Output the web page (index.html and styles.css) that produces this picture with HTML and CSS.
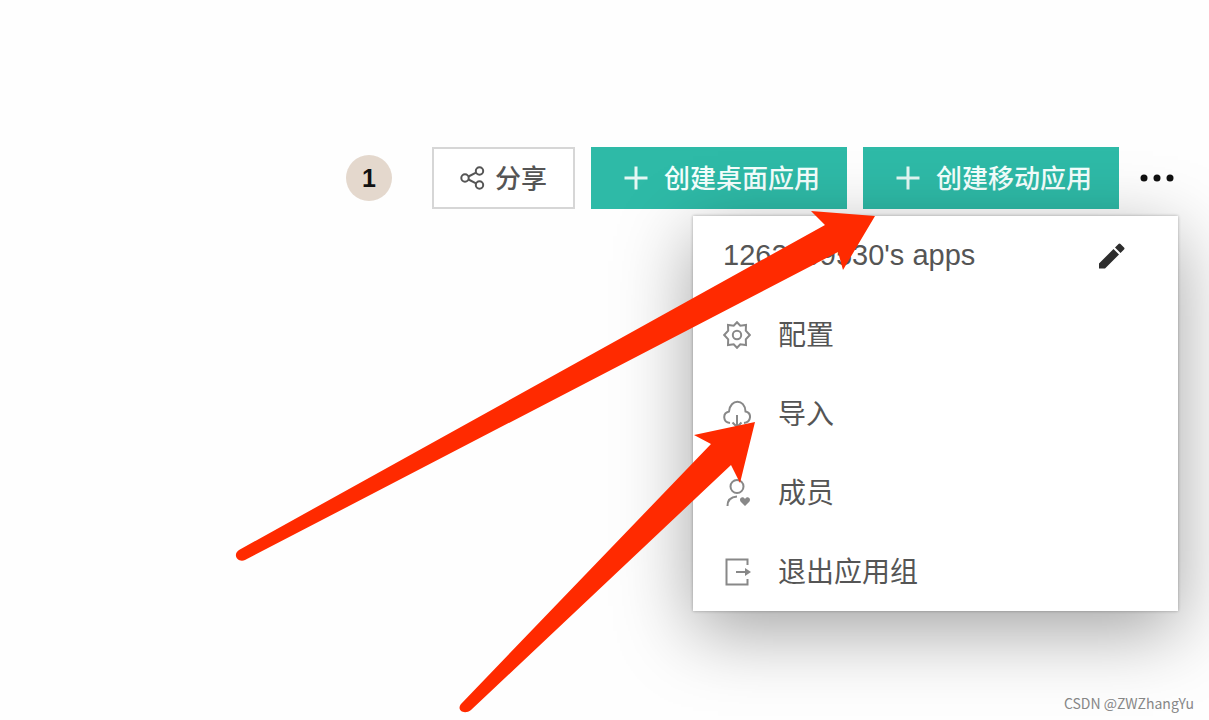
FILE: index.html
```html
<!DOCTYPE html>
<html lang="zh-CN">
<head>
    <meta charset="UTF-8">
    <meta name="viewport" content="width=device-width, initial-scale=1.0">
    <title>应用组</title>
    <link rel="stylesheet" href="styles.css">
</head>
<body>
    <header class="toolbar">
        <span class="member-count">1</span>
        <button type="button" class="btn btn-share">
            <svg class="share-icon" viewBox="0 0 26 26">
                <circle cx="5" cy="13" r="3.7"/>
                <circle cx="19.500" cy="6" r="3.700"/>
                <circle cx="19.500" cy="20" r="3.700"/>
                <path d="M8.500 11.500l7.500-3.800M8.500 14.500l7.500 3.800"/>
            </svg>
            <span class="label">分享</span>
        </button>
        <button type="button" class="btn btn-create">
            <svg class="plus-icon" viewBox="0 0 24 24"><path d="M12 0.500v23M0.500 12h23"/></svg>
            <span class="label">创建桌面应用</span>
        </button>
        <button type="button" class="btn btn-create">
            <svg class="plus-icon" viewBox="0 0 24 24"><path d="M12 0.500v23M0.500 12h23"/></svg>
            <span class="label">创建移动应用</span>
        </button>
        <button type="button" class="btn-more" aria-label="更多">
            <svg class="more-icon" viewBox="0 0 34 8">
                <circle cx="4" cy="4" r="3.500"/>
                <circle cx="17" cy="4" r="3.500"/>
                <circle cx="30" cy="4" r="3.500"/>
            </svg>
        </button>

        <div class="menu">
            <div class="menu-title">
                <span>1262009530's apps</span>
                <button type="button" class="btn-edit" aria-label="编辑">
                    <svg class="edit-icon" viewBox="0 0 26 26">
                        <path d="M0 20.500L14.500 6l5.500 5.500L6 25.500H0zM16 4.500L19.500 1q1-1 2 0l3.500 3.500q1 1 0 2L21.500 10z"/>
                    </svg>
                </button>
            </div>
            <button type="button" class="menu-item">
                <svg class="menu-icon" viewBox="0 0 28 28">
                    <path d="M14 1.200l3.300 3.600 5.700-.8-.2 5.600 4 4.400-4 4.400.2 5.600-5.700-.8L14 26.800l-3.300-3.600-5.700.8.2-5.600-4-4.400 4-4.400L5 4l5.700.8z"/>
                    <circle cx="14" cy="14" r="4.200"/>
                </svg>
                <span class="label">配置</span>
            </button>
            <button type="button" class="menu-item">
                <svg class="menu-icon" viewBox="0 0 28 28">
                    <path d="M7 23C-.5 22-.5 13 6 11.500 7-1.500 22-1.500 22.500 11.500 29 13 28.500 22 21 23M14 15v12M9.500 22.500L14 27l4.500-4.500"/>
                </svg>
                <span class="label">导入</span>
            </button>
            <button type="button" class="menu-item">
                <svg class="menu-icon" viewBox="0 0 28 28">
                    <circle cx="14" cy="7.500" r="6.500"/>
                    <path d="M4.500 27c0-5 3-9 9.500-9.500"/>
                    <path class="solid" d="M22 27l-4.500-4.500c-2-3.500 2.500-6 4.500-2.500 2-3.500 6.500-1 4.500 2.500z"/>
                </svg>
                <span class="label">成员</span>
            </button>
            <button type="button" class="menu-item">
                <svg class="menu-icon" viewBox="0 0 28 28">
                    <path d="M24.500 7V1.500h-21v25h21V21M13 14h13"/>
                    <path class="solid" d="M22 10l6 4-6 4z"/>
                </svg>
                <span class="label">退出应用组</span>
            </button>
        </div>
    </header>

    <svg class="arrows" viewBox="0 0 1209 720" aria-hidden="true">
        <path d="M239 550L825 225 811 211 875 216 843 270 838 252 245 560C238 563 232 555 239 550z"/>
        <path d="M461 704L711 444 694 435 755 422 740 483 731 465 471 710C465 715 456 711 461 704z"/>
    </svg>

    <footer class="watermark">CSDN @ZWZhangYu</footer>
</body>
</html>
```

FILE: styles.css
```css
* {
    box-sizing: border-box;
}

body {
    margin: 0;
    min-height: 100vh;
    display: flex;
    flex-direction: column;
    justify-content: space-between;
    position: relative;
    overflow-x: hidden;
    background-color: #fefefe;
    font-family: "Liberation Sans", "Noto Sans CJK SC", sans-serif;
}

button {
    padding: 0;
    border: none;
    background: none;
    font-family: inherit;
    cursor: pointer;
}

svg {
    fill: none;
    flex-shrink: 0;
}

.label {
    padding-bottom: 4px;
}

.toolbar {
    display: flex;
    justify-content: flex-end;
    align-items: center;
    gap: 16px;
    margin-top: 147px;
    padding-right: 35px;
    position: relative;
}

.member-count {
    width: 46px;
    height: 46px;
    margin-right: 24px;
    border-radius: 50%;
    background-color: #e4d8cd;
    color: #111;
    font-size: 25px;
    font-weight: bold;
    line-height: 46px;
    text-align: center;
}

.btn {
    display: flex;
    justify-content: center;
    align-items: center;
    height: 62px;
    font-size: 26px;
    font-weight: 500;
    white-space: nowrap;
}

.btn-share {
    gap: 9px;
    padding: 0 26px;
    border: 2px solid #d6d6d6;
    background-color: #fff;
    color: #555;
}

.share-icon {
    width: 26px;
    height: 26px;
    stroke: #555;
    stroke-width: 2;
}

.btn-create {
    gap: 16px;
    padding: 0 27px 0 33px;
    background-color: #2ebaa7;
    color: #f4fffd;
}

.plus-icon {
    width: 24px;
    height: 24px;
    stroke: #e4f7f4;
    stroke-width: 3;
}

.btn-more {
    display: flex;
    margin-left: 5px;
}

.more-icon {
    width: 34px;
    height: 8px;
    fill: #111;
}

.menu {
    position: absolute;
    top: 100%;
    right: 31px;
    width: 485px;
    margin-top: 7px;
    background-color: #fff;
    box-shadow: 0 0 3px rgba(0, 0, 0, 0.3), 0 20px 70px rgba(0, 0, 0, 0.36);
}

.menu-title,
.menu-item {
    display: flex;
    align-items: center;
    width: 100%;
    height: 79px;
    padding: 0 30px;
    color: #555;
}

.menu-title {
    justify-content: space-between;
    padding-right: 53px;
    font-size: 29px;
}

.btn-edit {
    display: flex;
}

.edit-icon {
    width: 26px;
    height: 26px;
    fill: #2d2d2d;
}

.menu-item {
    gap: 27px;
    font-size: 28px;
    text-align: left;
}

.menu-icon {
    width: 28px;
    height: 28px;
    stroke: #888;
    stroke-width: 2;
}

.menu-icon .solid {
    fill: #888;
    stroke: none;
}

.arrows {
    position: absolute;
    top: 0;
    right: 0;
    width: 1209px;
    height: 720px;
    fill: #ff2a00;
    pointer-events: none;
}

.watermark {
    padding: 0 15px 8px 0;
    color: #888;
    font-family: "Noto Sans CJK SC", sans-serif;
    font-size: 14px;
    line-height: 18px;
    text-align: right;
}
```
